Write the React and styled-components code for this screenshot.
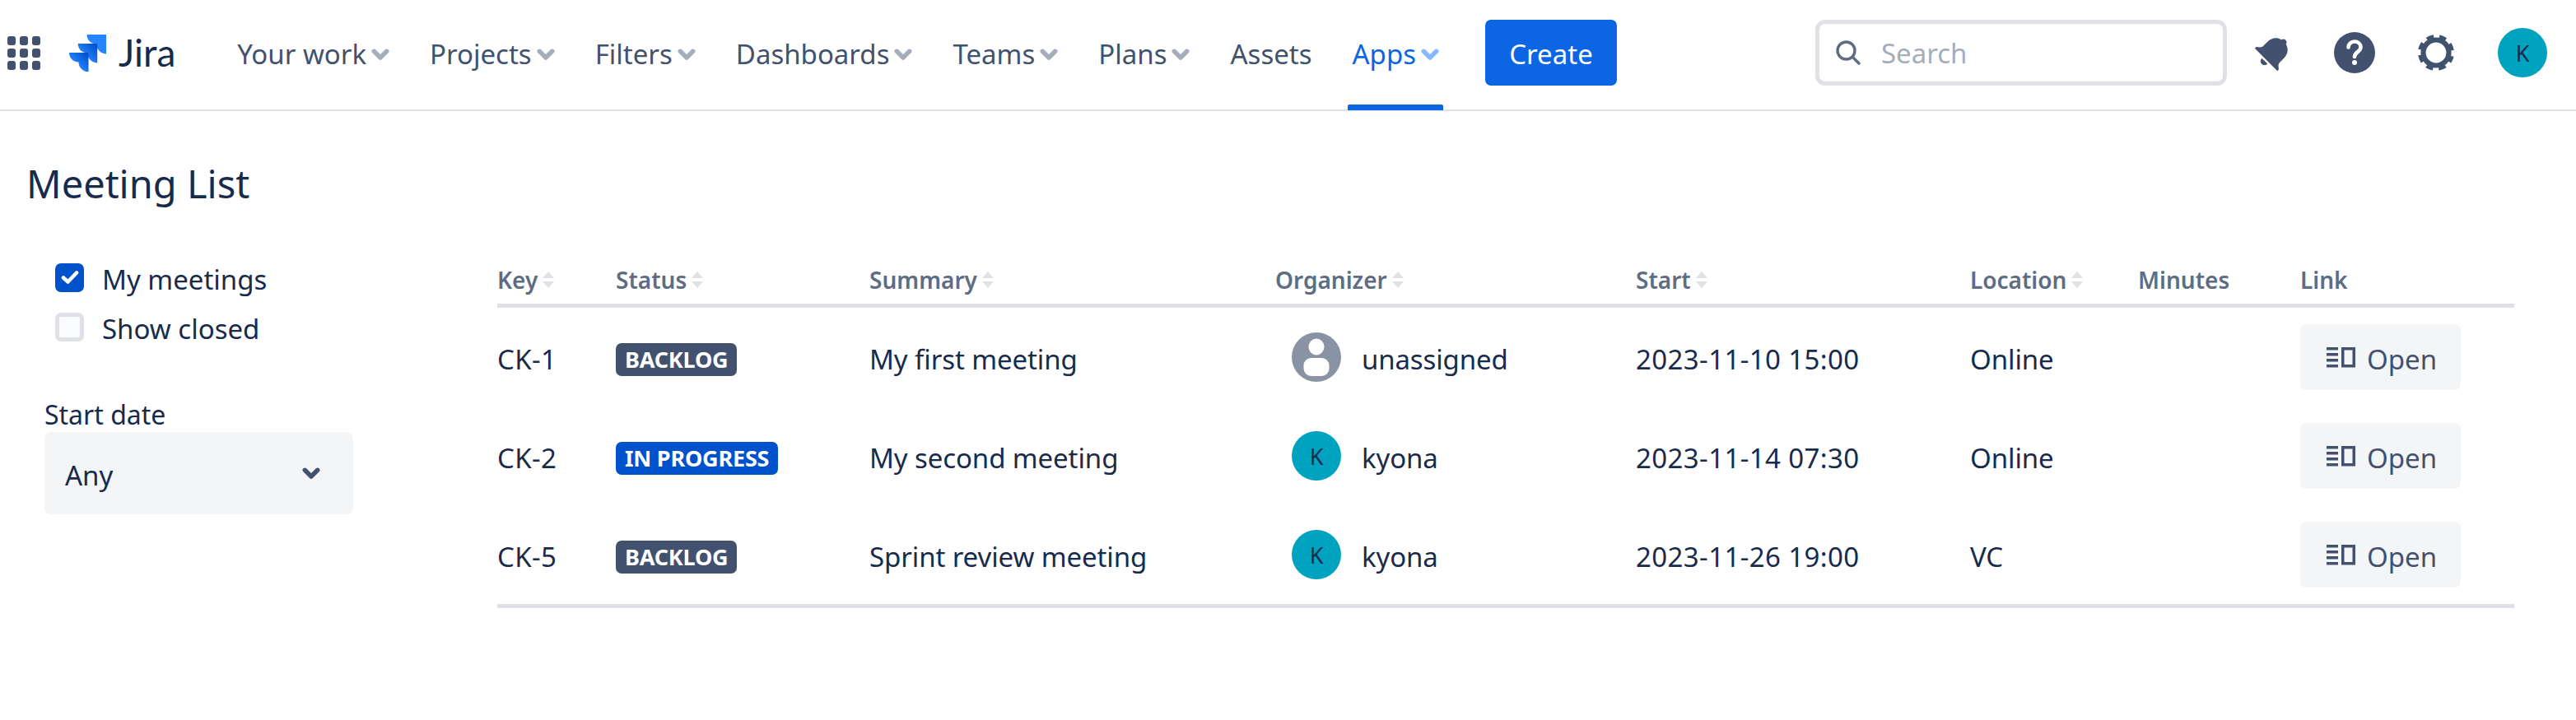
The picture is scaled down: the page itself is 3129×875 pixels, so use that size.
import React from "react";
import styled, { createGlobalStyle } from "styled-components";

const GlobalStyle = createGlobalStyle`
  html, body {
    margin: 0;
    padding: 0;
    background: #fff;
  }
  body {
    font-family: "Noto Sans", "Open Sans", sans-serif;
    color: #172B4D;
  }
`;

const COLUMNS = "144px 308px 493px 438px 406px 204px 197px 260px";

const NAV_ITEMS = [
  { label: "Your work", chevron: true },
  { label: "Projects", chevron: true },
  { label: "Filters", chevron: true },
  { label: "Dashboards", chevron: true },
  { label: "Teams", chevron: true },
  { label: "Plans", chevron: true },
  { label: "Assets" },
  { label: "Apps", chevron: true, active: true },
];

const MEETINGS = [
  { id: "CK-1", status: "BACKLOG", summary: "My first meeting", organizer: "unassigned", start: "2023-11-10 15:00", location: "Online" },
  { id: "CK-2", status: "IN PROGRESS", summary: "My second meeting", organizer: "kyona", start: "2023-11-14 07:30", location: "Online" },
  { id: "CK-5", status: "BACKLOG", summary: "Sprint review meeting", organizer: "kyona", start: "2023-11-26 19:00", location: "VC" },
];

const Chevron = ({ color, width = 22 }) => (
  <svg width={width} height={width * 0.65} viewBox="0 0 20 13" fill="none">
    <path d="M3 3L10 10L17 3" stroke={color} strokeWidth="5" strokeLinecap="round" strokeLinejoin="round" />
  </svg>
);

const AppSwitcher = () => (
  <svg width="40" height="41" viewBox="0 0 40 41">
    {[0, 15, 30].map((y) =>
      [0, 15, 30].map((x) => <rect key={`${x}-${y}`} x={x} y={y} width="10" height="11" rx="3" fill="#42526E" />)
    )}
  </svg>
);

const JIRA_TILE = "M0 0H23.5V23.5C16 23 11.5 17.5 11.5 11.5C5 11.5 0 6.5 0 0Z";

const JiraMark = () => (
  <svg width="45" height="45" viewBox="0 0 45 45">
    <defs>
      <linearGradient id="jiraFade" x1="1" y1="0" x2="0.35" y2="0.65">
        <stop offset="0.15" stopColor="#0052CC" />
        <stop offset="1" stopColor="#2684FF" />
      </linearGradient>
    </defs>
    <path d={JIRA_TILE} fill="#2684FF" transform="translate(21.5 0)" />
    <path d={JIRA_TILE} fill="url(#jiraFade)" transform="translate(10.7 11)" />
    <path d={JIRA_TILE} fill="url(#jiraFade)" transform="translate(0 22)" />
  </svg>
);

const SearchGlyph = () => (
  <svg width="30" height="30" viewBox="0 0 30 30" fill="none" stroke="#5E6C84" strokeWidth="3.4" strokeLinecap="round">
    <circle cx="12.5" cy="12.5" r="10.5" />
    <path d="M20.5 20.5L28 28" />
  </svg>
);

const BellGlyph = () => (
  <svg width="50" height="50" viewBox="0 0 46 46">
    <g fill="#42526E" transform="rotate(45 23 23)">
      <path d="M23 3c2 0 3.400 1.400 3.400 3 6 1.600 9.600 6.400 9.600 12.800v6.800c0 3 2.600 4 4.800 6.200v2.200H5.200v-2.200c2.200-2.200 4.800-3.200 4.800-6.200v-6.800C10 12.400 13.600 7.600 19.600 6 19.600 4.400 21 3 23 3Z" />
      <path d="M18.500 36.200h9c0 2.600-2 4.800-4.500 4.800s-4.500-2.200-4.500-4.800Z" />
    </g>
  </svg>
);

const HelpGlyph = () => (
  <svg width="50" height="50" viewBox="0 0 50 50">
    <circle cx="25" cy="25" r="25" fill="#42526E" />
    <path d="M17.500 18.500c0-4.200 3.400-7 7.500-7s7.500 2.800 7.500 6.800c0 5.700-7.500 6-7.500 11.700" fill="none" stroke="#fff" strokeWidth="4.600" strokeLinecap="round" />
    <circle cx="25" cy="37" r="3" fill="#fff" />
  </svg>
);

const GearGlyph = () => (
  <svg width="44" height="44" viewBox="0 0 44 44" fill="none" stroke="#42526E">
    <circle cx="22" cy="22" r="15.500" strokeWidth="6.200" />
    <circle cx="22" cy="22" r="19" strokeWidth="6" strokeDasharray="8.400 6.520" strokeDashoffset="4.200" transform="rotate(22.5 22 22)" />
  </svg>
);

const SortGlyph = () => (
  <svg width="14" height="20" viewBox="0 0 14 20" fill="#DFE1E6">
    <path d="M7 0L14 8H0Z" />
    <path d="M0 12H14L7 20Z" />
  </svg>
);

const CheckGlyph = () => (
  <svg width="22" height="18" viewBox="0 0 22 18" fill="none">
    <path d="M3 9.500L8.500 14.500L19 3.500" stroke="#fff" strokeWidth="4.600" strokeLinecap="round" strokeLinejoin="round" />
  </svg>
);

const PersonGlyph = () => (
  <svg width="60" height="60" viewBox="0 0 60 60">
    <circle cx="30" cy="30" r="30" fill="#8993A4" />
    <ellipse cx="30" cy="17.500" rx="9.500" ry="10" fill="#fff" />
    <rect x="14.500" y="31" width="31" height="22" rx="9" fill="#fff" />
  </svg>
);

const IssueGlyph = () => (
  <svg width="35" height="25" viewBox="0 0 35 25" fill="#42526E">
    <rect x="0" y="0" width="14" height="3.500" />
    <rect x="0" y="7" width="14" height="3.500" />
    <rect x="0" y="14" width="14" height="3.500" />
    <rect x="0" y="21" width="14" height="3.500" />
    <path fillRule="evenodd" d="M18 0H35V24.500H18ZM21.500 3.500V21H31.500V3.500Z" />
  </svg>
);

const App = () => (
  <>
    <GlobalStyle />
    <Header>
      <AppSwitcher />
      <Logo>
        <JiraMark />
        <LogoText>Jira</LogoText>
      </Logo>
      <Nav>
        {NAV_ITEMS.map((item) => (
          <NavItem key={item.label} active={item.active}>
            {item.label}
            {item.chevron && <Chevron color={item.active ? "#85B8FF" : "#A5ADBA"} />}
          </NavItem>
        ))}
      </Nav>
      <CreateButton>Create</CreateButton>
      <HeaderRight>
        <SearchBox>
          <SearchGlyph />
          <SearchText>Search</SearchText>
        </SearchBox>
        <IconButton><BellGlyph /></IconButton>
        <IconButton><HelpGlyph /></IconButton>
        <IconButton><GearGlyph /></IconButton>
        <Avatar>K</Avatar>
      </HeaderRight>
    </Header>
    <Main>
      <Title>Meeting List</Title>
      <Content>
        <Sidebar>
          <CheckRow>
            <Checkbox checked><CheckGlyph /></Checkbox>
            <Label>My meetings</Label>
          </CheckRow>
          <CheckRow>
            <Checkbox />
            <Label>Show closed</Label>
          </CheckRow>
          <FieldLabel>Start date</FieldLabel>
          <Select>
            <Label>Any</Label>
            <Chevron color="#42526E" />
          </Select>
        </Sidebar>
        <Table>
          <HeadRow>
            <HeadCell>Key<SortGlyph /></HeadCell>
            <HeadCell>Status<SortGlyph /></HeadCell>
            <HeadCell>Summary<SortGlyph /></HeadCell>
            <HeadCell>Organizer<SortGlyph /></HeadCell>
            <HeadCell>Start<SortGlyph /></HeadCell>
            <HeadCell>Location<SortGlyph /></HeadCell>
            <HeadCell>Minutes</HeadCell>
            <HeadCell>Link</HeadCell>
          </HeadRow>
          <Body>
            {MEETINGS.map((m) => (
              <Row key={m.id}>
                <NumberCell>{m.id}</NumberCell>
                <Cell><Lozenge progress={m.status === "IN PROGRESS"}>{m.status}</Lozenge></Cell>
                <TextCell>{m.summary}</TextCell>
                <OrganizerCell>
                  {m.organizer === "unassigned" ? <PersonGlyph /> : <SmallAvatar>K</SmallAvatar>}
                  <Label>{m.organizer}</Label>
                </OrganizerCell>
                <NumberCell>{m.start}</NumberCell>
                <TextCell>{m.location}</TextCell>
                <Cell />
                <Cell>
                  <OpenButton>
                    <IssueGlyph />
                    <Label>Open</Label>
                  </OpenButton>
                </Cell>
              </Row>
            ))}
          </Body>
        </Table>
      </Content>
    </Main>
  </>
);

const Header = styled.header`
  box-sizing: border-box;
  display: flex;
  align-items: center;
  height: 135px;
  padding: 0 35px 5px 9px;
  border-bottom: 2px solid #DFE1E6;
`;
const Logo = styled.div`
  display: flex;
  align-items: center;
  gap: 15px;
  margin-left: 35px;
`;
const LogoText = styled.span`
  font-family: Lato, sans-serif;
  font-size: 46px;
  line-height: 46px;
  color: #172B4D;
`;
const Nav = styled.nav`
  display: flex;
  gap: 49px;
  margin-left: 75px;
`;
const NavItem = styled.div`
  position: relative;
  display: flex;
  align-items: center;
  gap: 6px;
  padding-top: 4px;
  font-size: 33px;
  line-height: 46px;
  color: ${(p) => (p.active ? "#0C66E4" : "#42526E")};

  ${(p) => p.active && `
    &::after {
      content: "";
      position: absolute;
      left: -6px;
      right: -5px;
      bottom: -45px;
      height: 7px;
      background: #0C66E4;
      border-radius: 2px 2px 0 0;
    }
  `}
`;
const CreateButton = styled.button`
  width: 160px;
  height: 80px;
  margin-left: 56px;
  padding: 3px 0 0;
  border: none;
  border-radius: 7px;
  background: #0C66E4;
  color: #fff;
  font-family: inherit;
  font-size: 33px;
`;
const HeaderRight = styled.div`
  display: flex;
  align-items: center;
  margin-left: auto;
`;
const SearchBox = styled.div`
  box-sizing: border-box;
  display: flex;
  align-items: center;
  gap: 25px;
  width: 500px;
  height: 80px;
  padding: 0 20px;
  margin-right: 6px;
  border: 5px solid #DFE1E6;
  border-radius: 12px;
`;
const SearchText = styled.span`
  font-size: 33px;
  color: #A5ADBA;
`;
const IconButton = styled.div`
  display: flex;
  align-items: center;
  justify-content: center;
  width: 99px;
`;
const Avatar = styled.div`
  display: flex;
  align-items: center;
  justify-content: center;
  width: 60px;
  height: 60px;
  margin-left: 26px;
  border-radius: 50%;
  background: #00A3BF;
  color: #172B4D;
  font-size: 27px;
`;
const SmallAvatar = styled(Avatar)`
  margin-left: 0;
`;
const Main = styled.main`
  padding-left: 34px;
`;
const Title = styled.h1`
  margin: 0 0 0 -2px;
  padding-top: 53px;
  font-size: 47px;
  font-weight: 400;
  line-height: 70px;
  color: #172B4D;
`;
const Content = styled.div`
  display: flex;
  margin-top: 49px;
`;
const Sidebar = styled.aside`
  box-sizing: border-box;
  width: 570px;
  padding-left: 20px;
`;
const Label = styled.span`
  padding-top: 4px;
`;
const CheckRow = styled.label`
  display: flex;
  align-items: center;
  gap: 22px;
  height: 60px;
  padding-left: 13px;
  font-size: 33px;
  color: #172B4D;
`;
const Checkbox = styled.span`
  box-sizing: border-box;
  display: flex;
  align-items: center;
  justify-content: center;
  width: 35px;
  height: 35px;
  border-radius: 7px;
  background: ${(p) => (p.checked ? "#0052CC" : "#FAFBFC")};
  border: ${(p) => (p.checked ? "none" : "5px solid #DFE1E6")};
`;
const FieldLabel = styled.div`
  margin-top: 56px;
  font-size: 32px;
  line-height: 42px;
  color: #172B4D;
`;
const Select = styled.div`
  box-sizing: border-box;
  display: flex;
  align-items: center;
  justify-content: space-between;
  width: 375px;
  height: 100px;
  padding: 0 40px 0 25px;
  border-radius: 8px;
  background: #F4F5F7;
  font-size: 33px;
  color: #172B4D;
`;
const Table = styled.div`
  width: 2450px;
  margin-top: 12px;
`;
const HeadRow = styled.div`
  display: grid;
  grid-template-columns: ${COLUMNS};
  align-items: center;
  height: 42px;
  padding-bottom: 8px;
  border-bottom: 5px solid #DFE1E6;
`;
const HeadCell = styled.div`
  display: flex;
  align-items: center;
  gap: 6px;
  font-size: 28px;
  font-weight: 600;
  color: #5E6C84;
`;
const Body = styled.div`
  border-bottom: 5px solid #DFE1E6;
`;
const Row = styled.div`
  display: grid;
  grid-template-columns: ${COLUMNS};
  align-items: center;
  height: 120px;
`;
const Cell = styled.div`
  font-size: 33px;
  color: #172B4D;
`;
const TextCell = styled(Cell)`
  padding-top: 4px;
  letter-spacing: -0.1px;
`;
const NumberCell = styled(Cell)`
  padding-top: 4px;
  letter-spacing: 0.4px;
`;
const OrganizerCell = styled(Cell)`
  display: flex;
  align-items: center;
  gap: 25px;
  padding-left: 20px;
  letter-spacing: -0.15px;
`;
const Lozenge = styled.span`
  display: inline-block;
  height: 40px;
  padding: 0 11px;
  border-radius: 7px;
  background: ${(p) => (p.progress ? "#0052CC" : "#42526E")};
  color: #fff;
  font-size: 27px;
  font-weight: 700;
  letter-spacing: -0.2px;
  line-height: 40px;
`;
const OpenButton = styled.div`
  box-sizing: border-box;
  display: flex;
  align-items: center;
  gap: 14px;
  width: 195px;
  height: 80px;
  padding-left: 32px;
  border-radius: 7px;
  background: #F4F5F7;
  color: #42526E;
  font-size: 33px;
`;

export default App;
